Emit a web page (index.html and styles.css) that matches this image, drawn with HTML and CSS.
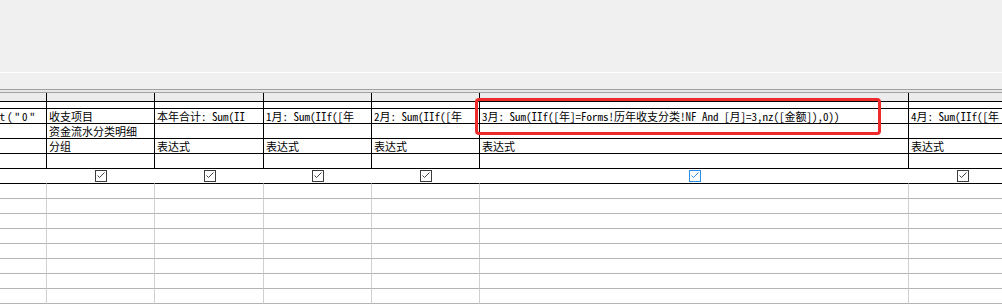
FILE: index.html
```html
<!DOCTYPE html>
<html>
<head>
<meta charset="utf-8">
<link rel="stylesheet" href="styles.css">
</head>
<body>
<div class="pane-top"></div>
<div class="pane-gap"></div>
<div class="splitter"></div>
<div class="grid-wrap">
  <div class="row sel">
    <div class="cell"></div><div class="cell"></div><div class="cell"></div><div class="cell"></div><div class="cell"></div><div class="cell"></div><div class="cell"></div>
  </div>
  <div class="row thin">
    <div class="cell"></div><div class="cell"></div><div class="cell"></div><div class="cell"></div><div class="cell"></div><div class="cell"></div><div class="cell"></div>
  </div>
  <div class="row">
    <div class="cell first"><span>Format("0"</span></div>
    <div class="cell">收支项目</div>
    <div class="cell">本年合计: Sum(II</div>
    <div class="cell">1月: Sum(IIf([年</div>
    <div class="cell">2月: Sum(IIf([年</div>
    <div class="cell">3月: Sum(IIf([年]=Forms!历年收支分类!NF And [月]=3,nz([金额]),0))</div>
    <div class="cell">4月: Sum(IIf([年</div>
  </div>
  <div class="row">
    <div class="cell"></div><div class="cell">资金流水分类明细</div><div class="cell"></div><div class="cell"></div><div class="cell"></div><div class="cell"></div><div class="cell"></div>
  </div>
  <div class="row">
    <div class="cell"></div><div class="cell">分组</div><div class="cell">表达式</div><div class="cell">表达式</div><div class="cell">表达式</div><div class="cell">表达式</div><div class="cell">表达式</div>
  </div>
  <div class="row">
    <div class="cell"></div><div class="cell"></div><div class="cell"></div><div class="cell"></div><div class="cell"></div><div class="cell"></div><div class="cell"></div>
  </div>
  <div class="row show">
    <div class="cell"><svg class="cb" width="12" height="12" viewBox="0 0 12 12"><rect x="0.5" y="0.5" width="11" height="11"/><polyline points="2.5,5.5 4.5,7.5 9.5,2.5"/></svg></div>
    <div class="cell"><svg class="cb" width="12" height="12" viewBox="0 0 12 12"><rect x="0.5" y="0.5" width="11" height="11"/><polyline points="2.5,5.5 4.5,7.5 9.5,2.5"/></svg></div>
    <div class="cell"><svg class="cb" width="12" height="12" viewBox="0 0 12 12"><rect x="0.5" y="0.5" width="11" height="11"/><polyline points="2.5,5.5 4.5,7.5 9.5,2.5"/></svg></div>
    <div class="cell"><svg class="cb" width="12" height="12" viewBox="0 0 12 12"><rect x="0.5" y="0.5" width="11" height="11"/><polyline points="2.5,5.5 4.5,7.5 9.5,2.5"/></svg></div>
    <div class="cell"><svg class="cb" width="12" height="12" viewBox="0 0 12 12"><rect x="0.5" y="0.5" width="11" height="11"/><polyline points="2.5,5.5 4.5,7.5 9.5,2.5"/></svg></div>
    <div class="cell"><svg class="cb hot" width="12" height="12" viewBox="0 0 12 12"><rect x="0.5" y="0.5" width="11" height="11"/><polyline points="2.5,5.5 4.5,7.5 9.5,2.5"/></svg></div>
    <div class="cell"><svg class="cb" width="12" height="12" viewBox="0 0 12 12"><rect x="0.5" y="0.5" width="11" height="11"/><polyline points="2.5,5.5 4.5,7.5 9.5,2.5"/></svg></div>
  </div>
  <div class="row crit"><div class="cell"></div><div class="cell"></div><div class="cell"></div><div class="cell"></div><div class="cell"></div><div class="cell"></div><div class="cell"></div></div>
  <div class="row crit"><div class="cell"></div><div class="cell"></div><div class="cell"></div><div class="cell"></div><div class="cell"></div><div class="cell"></div><div class="cell"></div></div>
  <div class="row crit"><div class="cell"></div><div class="cell"></div><div class="cell"></div><div class="cell"></div><div class="cell"></div><div class="cell"></div><div class="cell"></div></div>
  <div class="row crit"><div class="cell"></div><div class="cell"></div><div class="cell"></div><div class="cell"></div><div class="cell"></div><div class="cell"></div><div class="cell"></div></div>
  <div class="row crit"><div class="cell"></div><div class="cell"></div><div class="cell"></div><div class="cell"></div><div class="cell"></div><div class="cell"></div><div class="cell"></div></div>
  <div class="row crit"><div class="cell"></div><div class="cell"></div><div class="cell"></div><div class="cell"></div><div class="cell"></div><div class="cell"></div><div class="cell"></div></div>
  <div class="row crit"><div class="cell"></div><div class="cell"></div><div class="cell"></div><div class="cell"></div><div class="cell"></div><div class="cell"></div><div class="cell"></div></div>
  <div class="row crit"><div class="cell"></div><div class="cell"></div><div class="cell"></div><div class="cell"></div><div class="cell"></div><div class="cell"></div><div class="cell"></div></div>
  <div class="annot"></div>
</div>
</body>
</html>
```

FILE: styles.css
```css
html, body {
  margin: 0;
  padding: 0;
  width: 1002px;
  height: 305px;
  overflow: hidden;
  background: #ffffff;
}

.pane-top {
  height: 72px;
  background: #f0f0f0;
}

.pane-gap {
  height: 16px;
  border-top: 1px solid #ffffff;
  background: #f0f0f0;
}

.splitter {
  height: 2px;
  border-top: 1px solid #a0a0a0;
  border-bottom: 1px solid #a0a0a0;
  background: #e6e6e6;
}

.grid-wrap {
  position: relative;
  background: #ffffff;
}

.row {
  display: grid;
  grid-template-columns: 108px 108px 109px 108px 108px 429px 108px;
  margin-left: -61px;
}

.cell {
  box-sizing: content-box;
  height: 14px;
  border-right: 1px solid #000000;
  border-bottom: 1px solid #000000;
  padding-left: 2px;
  overflow: hidden;
  white-space: nowrap;
  font-family: "Noto Sans Mono CJK SC", "Noto Sans CJK SC", sans-serif;
  font-size: 11px;
  line-height: 14px;
  color: #000000;
}

.sel .cell {
  height: 8px;
  background: #ececec;
}

.thin .cell {
  height: 6px;
}

.first {
  display: flex;
  justify-content: flex-end;
  padding-right: 9px;
  letter-spacing: 2px;
}

.show .cell {
  display: flex;
  align-items: center;
  justify-content: center;
  padding-left: 0;
  border-right-color: transparent;
  position: relative;
}

.show .cell::after {
  content: "";
  position: absolute;
  right: -1px;
  top: 0;
  width: 1px;
  height: 5px;
  background: #000000;
}

.cb {
  display: block;
  margin-left: 1px;
}

.cb rect {
  fill: #ffffff;
  stroke: #3c3c3c;
  stroke-width: 1;
}

.cb polyline {
  fill: none;
  stroke: #444444;
  stroke-width: 1;
}

.cb.hot rect,
.cb.hot polyline {
  stroke: #2f8fe8;
}

.crit .cell {
  border-right-color: #d0d0d0;
  border-bottom-color: #b4b4b4;
}

.annot {
  position: absolute;
  left: 475px;
  top: 5px;
  width: 400px;
  height: 31px;
  border: 3px solid #ee2a2a;
  border-radius: 4px;
  box-sizing: content-box;
}
```
